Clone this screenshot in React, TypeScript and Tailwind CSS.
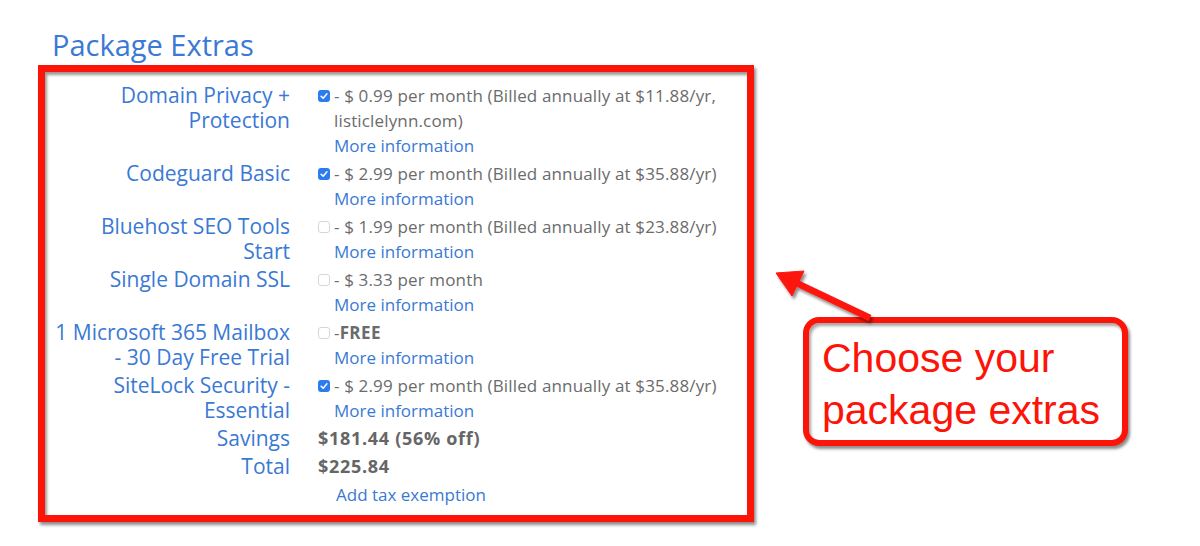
import React from 'react';

type Extra = {
  label: React.ReactNode;
  detail: React.ReactNode;
  checked: boolean;
};

const extras: Extra[] = [
  {
    label: <>Domain Privacy +<br />Protection</>,
    detail: <>- $ 0.99 per month (Billed annually at $11.88/yr,<br />listiclelynn.com)</>,
    checked: true,
  },
  {
    label: <>Codeguard Basic</>,
    detail: <>- $ 2.99 per month (Billed annually at $35.88/yr)</>,
    checked: true,
  },
  {
    label: <>Bluehost SEO Tools<br />Start</>,
    detail: <>- $ 1.99 per month (Billed annually at $23.88/yr)</>,
    checked: false,
  },
  {
    label: <>Single Domain SSL</>,
    detail: <>- $ 3.33 per month</>,
    checked: false,
  },
  {
    label: <>1 Microsoft 365 Mailbox<br />- 30 Day Free Trial</>,
    detail: <>-<span className="font-bold tracking-[0.4px]">FREE</span></>,
    checked: false,
  },
  {
    label: <>SiteLock Security -<br />Essential</>,
    detail: <>- $ 2.99 per month (Billed annually at $35.88/yr)</>,
    checked: true,
  },
];

const Checkbox = ({ checked }: { checked: boolean }) =>
  checked ? (
    <span className="mt-[7px] flex h-[12px] w-[12px] shrink-0 items-center justify-center rounded-[3px] bg-[#2c7cf0]">
      <svg viewBox="0 0 12 12" className="h-[10px] w-[10px]">
        <path d="M2.5 6.3 L5 8.6 L9.5 3.4" fill="none" stroke="#fff" strokeWidth="1.8" strokeLinecap="round" strokeLinejoin="round" />
      </svg>
    </span>
  ) : (
    <span className="mt-[7px] h-[12px] w-[12px] shrink-0 rounded-[3px] border border-[#d6d6d6] bg-white" />
  );

const Label = ({ children }: { children: React.ReactNode }) => (
  <div className="whitespace-nowrap text-right text-[21px] leading-[25px] text-[#3a79d4]">{children}</div>
);

export default function App() {
  return (
    <div className="relative h-[546px] w-[1200px] overflow-hidden bg-white font-['Open_Sans',sans-serif]">
      <div className="flex items-start">
        {/* left: form */}
        <div className="pl-[38px]">
          <h2 className="ml-[14px] mt-[25px] text-[29px] leading-[40px] text-[#3a79d4]">Package Extras</h2>
          <div className="w-[716px] border-[7px] border-[#fd1409] bg-white pb-[8px] pl-[5px] pt-[11px] shadow-[2px_3px_3px_rgba(0,0,0,0.45),inset_2px_3px_3px_rgba(0,0,0,0.4)]">
            <div className="grid grid-cols-[240px_1fr] gap-x-[28px] gap-y-[3px]">
              {extras.map((e, i) => (
                <React.Fragment key={i}>
                  <Label>{e.label}</Label>
                  <div className="flex gap-[4px]">
                    <Checkbox checked={e.checked} />
                    <div className="whitespace-nowrap text-[17px] leading-[25px] tracking-[0.15px] text-[#6b6b6b]">
                      <div>{e.detail}</div>
                      <div className="tracking-normal text-[#3a79d4]">More information</div>
                    </div>
                  </div>
                </React.Fragment>
              ))}
              <Label>Savings</Label>
              <div className="text-[18px] font-bold leading-[25px] tracking-[0.7px] text-[#666]">$181.44 (56% off)</div>
              <Label>Total</Label>
              <div className="text-[18px] font-bold leading-[25px] tracking-[0.7px] text-[#666]">$225.84</div>
              <div />
              <div className="pl-[18px] text-[17px] leading-[25px] text-[#3a79d4]">Add tax exemption</div>
            </div>
          </div>
        </div>

        {/* right: callout */}
        <div className="ml-[49px] mt-[317px] w-[325px] rounded-[16px] border-[6px] border-[#fd1409] bg-white pb-[4px] pl-[13px] pt-[9px] shadow-[2px_3px_3px_rgba(0,0,0,0.45),inset_2px_3px_3px_rgba(0,0,0,0.35)]">
          <div className="font-['Liberation_Sans',Arial,sans-serif] text-[41px] leading-[52px] text-[#fd1409]">
            Choose your
            <br />
            package extras
          </div>
        </div>
      </div>

      {/* annotation arrow */}
      <svg className="pointer-events-none absolute left-0 top-0" width="1200" height="546" viewBox="0 0 1200 546">
        <defs>
          <filter id="arrowShadow" x="-20%" y="-20%" width="140%" height="140%">
            <feDropShadow dx="2" dy="3" stdDeviation="1.5" floodColor="#000" floodOpacity="0.45" />
          </filter>
        </defs>
        <g filter="url(#arrowShadow)" fill="#fd1409" stroke="#fd1409">
          <line x1="870" y1="318" x2="786" y2="278" strokeWidth="6.5" />
          <polygon points="776,273 804,271 792,296" strokeWidth="1" strokeLinejoin="round" />
        </g>
      </svg>
    </div>
  );
}
